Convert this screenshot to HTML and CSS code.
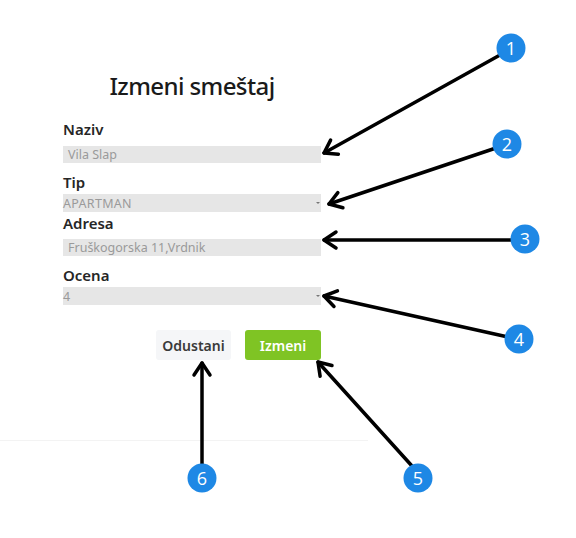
FILE: index.html
```html
<!DOCTYPE html>
<html lang="sr">
<head>
<meta charset="utf-8">
<title>Izmeni smeštaj</title>
<link rel="stylesheet" href="styles.css">
</head>
<body>
<div class="page">
  <div class="modal">
    <form class="form">
      <h1 class="title">Izmeni smeštaj</h1>
      <label class="label">Naziv</label>
      <div class="input">Vila Slap</div>
      <label class="label label-tip">Tip</label>
      <div class="select">APARTMAN<span class="caret"></span></div>
      <label class="label label-adresa">Adresa</label>
      <div class="input">Fruškogorska 11,Vrdnik</div>
      <label class="label label-tip">Ocena</label>
      <div class="select">4<span class="caret"></span></div>
      <div class="actions">
        <button type="button" class="btn btn-cancel">Odustani</button>
        <button type="button" class="btn btn-ok">Izmeni</button>
      </div>
    </form>
  </div>
  <svg class="overlay" width="576" height="538" viewBox="0 0 576 538">
    <defs>
      <marker id="ah" markerUnits="userSpaceOnUse" markerWidth="30" markerHeight="30" refX="0" refY="0" orient="auto" overflow="visible">
        <path d="M-12,-8 L0,0 L-12,8" fill="none" stroke="#000" stroke-width="3.5" stroke-linecap="round" stroke-linejoin="round"/>
      </marker>
    </defs>
    <g stroke="#000" stroke-width="3.5" stroke-linecap="round" fill="none">
      <line x1="500" y1="55" x2="324" y2="153" marker-end="url(#ah)"/>
      <line x1="496" y1="148" x2="329" y2="204" marker-end="url(#ah)"/>
      <line x1="512" y1="240" x2="324" y2="240" marker-end="url(#ah)"/>
      <line x1="508" y1="337" x2="324" y2="296" marker-end="url(#ah)"/>
      <line x1="412" y1="466" x2="318" y2="362" marker-end="url(#ah)"/>
      <line x1="202" y1="466" x2="202" y2="363" marker-end="url(#ah)"/>
    </g>
    <g fill="#1e88e5">
      <circle cx="511" cy="48" r="14.5"/>
      <circle cx="507" cy="144" r="14.5"/>
      <circle cx="525" cy="239" r="14.5"/>
      <circle cx="519" cy="339" r="14.5"/>
      <circle cx="418" cy="478" r="14.5"/>
      <circle cx="202" cy="478" r="14.5"/>
    </g>
    <g class="num" fill="#fff" text-anchor="middle">
      <text x="511" y="54.5">1</text>
      <text x="507" y="150.5">2</text>
      <text x="525" y="245.5">3</text>
      <text x="519" y="345.5">4</text>
      <text x="418" y="484.5">5</text>
      <text x="202" y="484.5">6</text>
    </g>
  </svg>
</div>
</body>
</html>
```
FILE: styles.css
```css
* { box-sizing: border-box; }
html, body { margin: 0; padding: 0; background: #fff; }
body { font-family: "Noto Sans", "Open Sans", sans-serif; color: #222; }
.page { position: relative; width: 576px; height: 538px; overflow: hidden; }
.modal {
  width: 368px;
  height: 441px;
  border-bottom: 1px solid #f3f3f3;
  padding-top: 70px;
  padding-left: 63px;
}
.form { width: 258px; display: flex; flex-direction: column; }
.title {
  margin: 0 0 17px 0;
  font-size: 24px;
  line-height: 32px;
  font-weight: 500;
  letter-spacing: -0.6px;
  text-align: center;
  color: #1a1a1a;
}
.label {
  font-size: 15px;
  line-height: 20px;
  font-weight: 600;
  color: #262626;
  margin-bottom: 7px;
}
.label-tip { margin-top: 9px; margin-bottom: 2px; }
.label-adresa { margin-top: 1px; margin-bottom: 6px; }
.input, .select {
  height: 17px;
  background: #e6e6e6;
  color: #9a9a9a;
  font-size: 12.5px;
  line-height: 17px;
  padding-left: 5px;
  position: relative;
}
.select { height: 18px; line-height: 19px; padding-left: 0; font-size: 12.5px; letter-spacing: 0.3px; }
.caret {
  position: absolute;
  right: 1px;
  top: 8px;
  width: 0; height: 0;
  border-left: 2px solid transparent;
  border-right: 2px solid transparent;
  border-top: 2px solid #777;
}
.actions {
  display: flex;
  justify-content: flex-end;
  gap: 14px;
  margin-top: 25px;
}
.btn {
  height: 30px;
  border: none;
  border-radius: 3px;
  font-family: "Noto Sans", "Open Sans", sans-serif;
  font-size: 14px;
  font-weight: 600;
  padding: 0;
  cursor: pointer;
}
.btn-cancel { width: 75px; background: #f5f6f8; color: #3a3a3a; }
.btn-ok { width: 76px; background: #7fc424; color: #fff; }
.overlay { position: absolute; left: 0; top: 0; }
.num text { font-family: "Open Sans", "Noto Sans", sans-serif; font-size: 18px; font-weight: 400; }
```
